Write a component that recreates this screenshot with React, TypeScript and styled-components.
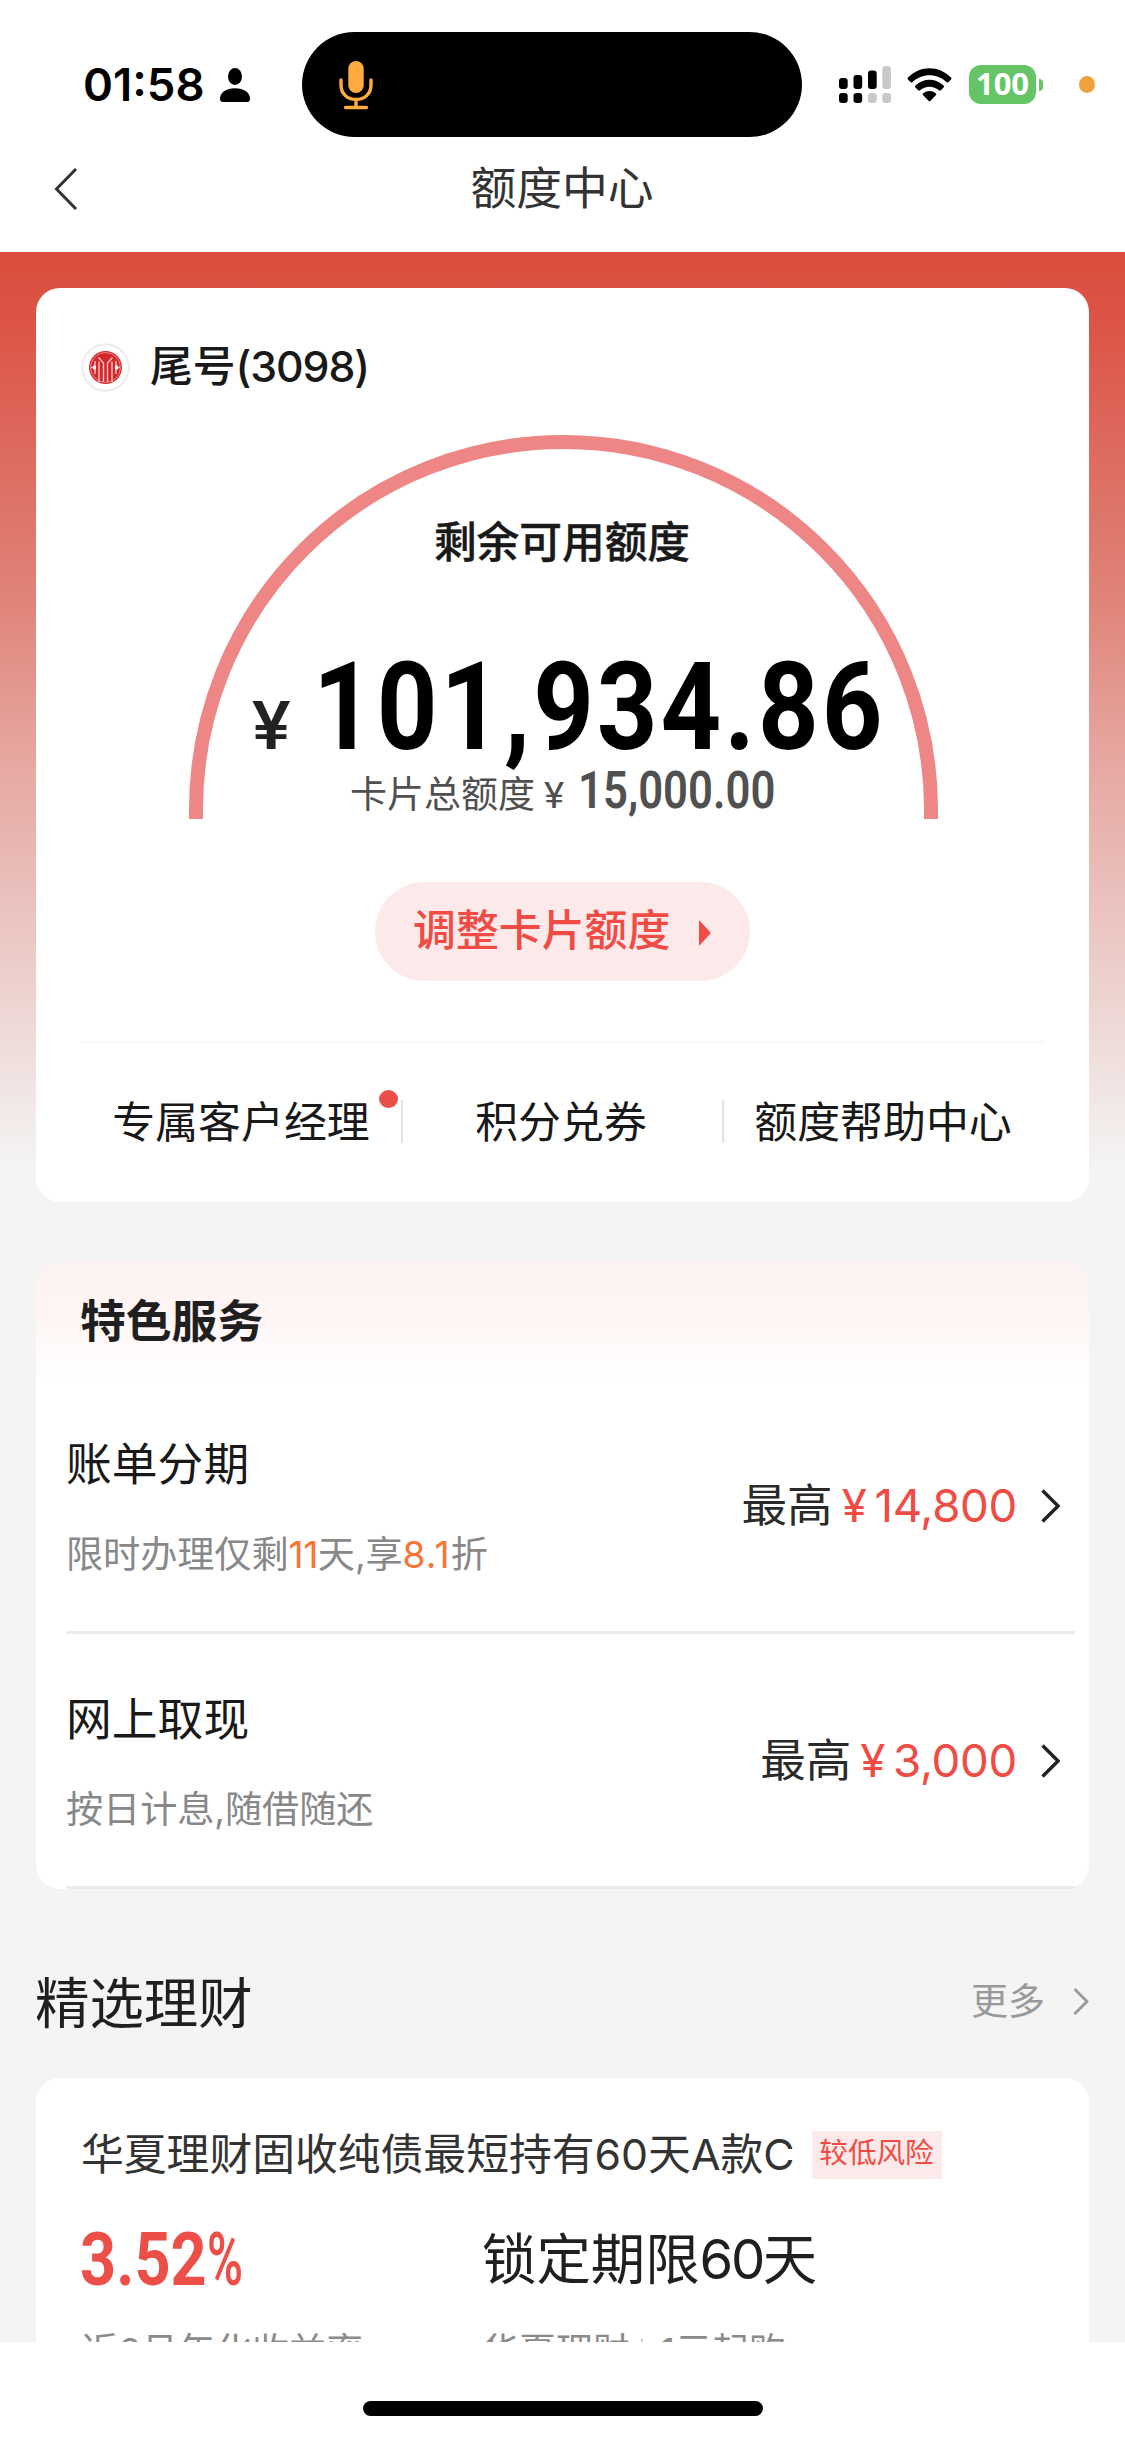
import React from "react";
import styled, { createGlobalStyle } from "styled-components";

const GlobalStyle = createGlobalStyle`
  * { box-sizing: border-box; }
  body {
    margin: 0;
    background: #fff;
    color: #1f1f1f;
    font-family: Inter, "Noto Sans CJK SC", sans-serif;
  }
  svg { display: block; flex: none; }
`;

const Screen = styled.div`
  width: 1125px;
  height: 2439px;
  display: flex;
  flex-direction: column;
  overflow: hidden;
  background: #fff;
`;

const StatusBar = styled.header`
  flex: none;
  height: 137px;
  padding: 32px 30px 0 83px;
  display: flex;
  align-items: center;
`;

const Clock = styled.span`
  width: 137px;
  font-size: 45.5px;
  font-weight: 600;
  line-height: 60px;
  color: #000;
  white-space: nowrap;
`;

const Island = styled.div`
  width: 500px;
  height: 105px;
  margin: 0 37px 0 52px;
  padding-left: 37px;
  border-radius: 53px;
  background: #000;
  display: flex;
  align-items: center;
`;

const Battery = styled.div`
  width: 67px;
  height: 39px;
  margin-left: 17px;
  border-radius: 12px;
  background: #65c466;
  color: #fff;
  font: 700 31px/37px "Open Sans", "Noto Sans", sans-serif;
  text-align: center;
`;

const BatteryTip = styled.div`
  width: 4px;
  height: 12px;
  margin-left: 3px;
  border-radius: 0 6px 6px 0;
  background: #65c466;
`;

const MicDot = styled.div`
  width: 16px;
  height: 17px;
  margin-left: 36px;
  border-radius: 50%;
  background: #f0a13c;
`;

const NavBar = styled.nav`
  flex: none;
  height: 115px;
  padding: 0 54px 12px;
  display: grid;
  grid-template-columns: 60px 1fr 60px;
  align-items: center;
`;

const NavTitle = styled.h1`
  margin: 0;
  padding: 1px 1px 0 0;
  font-size: 45.8px;
  font-weight: 400;
  line-height: 60px;
  color: #333;
  text-align: center;
`;

const Content = styled.main`
  flex: none;
  height: 2090px;
  padding: 36px 36px 0;
  overflow: hidden;
  background: #f4f4f4
    linear-gradient(180deg, #db4d3e 0, #dc5446 70px, #dd6256 150px, #e08479 348px, #e6a59f 498px, #edd4d1 748px, #f4f4f4 916px)
    no-repeat;
`;

const QuotaCard = styled.section`
  width: 1053px;
  height: 914px;
  padding: 53px 45px 0;
  border-radius: 24px;
  background: #fff;
`;

const BankLine = styled.div`
  height: 52px;
  display: flex;
  align-items: center;
  gap: 20px;
  font-size: 42.8px;
  font-weight: 500;
  line-height: 52px;
  color: #191919;
`;

const CardTail = styled.span`
  letter-spacing: -1.1px;
`;

const Dial = styled.div`
  position: relative;
  width: 749px;
  height: 384px;
  margin: 42px auto 0 108px;
`;

const DialArc = styled.svg`
  position: absolute;
  inset: 0;
`;

const DialBody = styled.div`
  position: relative;
  padding-top: 82px;
  display: flex;
  flex-direction: column;
  align-items: center;
`;

const DialLabel = styled.div`
  padding-right: 3px;
  font-size: 42.7px;
  font-weight: 500;
  line-height: 52px;
  color: #191919;
  -webkit-text-stroke: 0.4px #191919;
`;

const AmountRow = styled.div<{ $top: number; $left: number; $height: number }>`
  align-self: flex-start;
  margin: ${(p) => p.$top}px 0 0 ${(p) => p.$left}px;
  height: ${(p) => p.$height}px;
  display: flex;
  align-items: baseline;
  line-height: ${(p) => p.$height}px;
  white-space: nowrap;
`;

const Digits = styled.span<{ $size: number; $weight: number; $scale: number; $width: number; $color: string; $track?: number; $gap?: number }>`
  display: inline-block;
  width: ${(p) => p.$width}px;
  margin-left: ${(p) => p.$gap ?? 0}px;
  font-family: Roboto, sans-serif;
  font-size: ${(p) => p.$size}px;
  font-weight: ${(p) => p.$weight};
  letter-spacing: ${(p) => p.$track ?? 0}px;
  color: ${(p) => p.$color};
  transform: scaleX(${(p) => p.$scale});
  transform-origin: left center;
  white-space: nowrap;
`;

const TotalLabel = styled.span`
  font-size: 37px;
  color: #505050;
`;

const AdjustButton = styled.button`
  width: 375px;
  height: 99px;
  margin: 63px auto 0 294px;
  padding: 0 0 3px 38px;
  border: 0;
  border-radius: 50px;
  background: #fbeae9;
  color: #f04b44;
  display: flex;
  align-items: center;
  gap: 28px;
  font: 500 42.9px/52px Inter, "Noto Sans CJK SC", sans-serif;
`;

const PlayMark = styled.svg`
  margin-top: 5px;
`;

const QuickLinks = styled.div`
  margin-top: 60px;
  padding-top: 57px;
  border-top: 2px solid #f7f7f7;
  display: grid;
  grid-template-columns: 320px 321px 323px;
`;

const QuickLink = styled.a`
  position: relative;
  height: 43px;
  text-align: center;
  font-size: 42.9px;
  line-height: 44px;
  color: #191919;
  white-space: nowrap;
  & + & {
    padding-right: 3px;
    border-left: 2px solid #e3e3e3;
  }
`;

const Badge = styled.i`
  position: absolute;
  top: -10px;
  right: 3px;
  width: 19px;
  height: 18px;
  border-radius: 50%;
  background: #ea4f49;
`;

const ServiceCard = styled.section`
  width: 1053px;
  height: 627px;
  margin-top: 60px;
  border-radius: 24px;
  background: #fff linear-gradient(180deg, #fcf2f1 0, #fef5f4 50px, #fff 120px) no-repeat;
`;

const ServiceTitle = styled.h2`
  margin: 0;
  padding: 30px 44px 0;
  height: 117px;
  font-size: 45.8px;
  font-weight: 600;
  line-height: 60px;
`;

const ServiceRow = styled.div`
  height: 255px;
  margin: 0 14px 0 30px;
  padding-right: 15px;
  border-bottom: 3px solid #ebebeb;
  display: flex;
  align-items: center;
  justify-content: space-between;
`;

const ServiceText = styled.div`
  padding-top: 9px;
  display: flex;
  flex-direction: column;
  gap: 36px;
`;

const ServiceName = styled.div`
  font-size: 45.8px;
  line-height: 54px;
  color: #191919;
`;

const ServiceNote = styled.div`
  font-size: 37.2px;
  line-height: 54px;
  color: #888;
  letter-spacing: -0.1px;
`;

const Hot = styled.span<{ $track: number }>`
  color: #f87434;
  letter-spacing: ${(p) => p.$track}px;
`;

const Limit = styled.div`
  padding-top: 2px;
  display: flex;
  align-items: center;
  font-size: 45.6px;
  line-height: 54px;
  color: #2a2a2a;
`;

const LimitValue = styled.span<{ $gap: number }>`
  margin-left: ${(p) => p.$gap}px;
  color: #f04b44;
  letter-spacing: -0.3px;
`;

const Arrow = styled.svg`
  margin-left: 24px;
`;

const SectionHead = styled.div`
  height: 189px;
  padding-top: 38px;
  display: flex;
  align-items: center;
  justify-content: space-between;
  width: 1053px;
`;

const SectionTitle = styled.h2`
  margin: 0 0 0 -1px;
  font-size: 54.4px;
  font-weight: 400;
  line-height: 70px;
`;

const More = styled.a`
  display: flex;
  align-items: center;
  gap: 28px;
  font-size: 37px;
  line-height: 50px;
  margin-top: -2px;
  color: #999;
`;

const FundCard = styled.section`
  width: 1053px;
  height: 400px;
  padding: 51px 45px 0;
  border-radius: 24px;
  background: #fff;
`;

const FundHead = styled.div`
  height: 52px;
  display: flex;
  align-items: center;
  gap: 18px;
`;

const FundName = styled.div`
  font-size: 42.8px;
  line-height: 52px;
  color: #333;
  white-space: nowrap;
`;

const RiskTag = styled.span`
  width: 130px;
  height: 48px;
  padding-right: 2px;
  background: #fbeae9;
  color: #f04b44;
  font-size: 28.6px;
  line-height: 44px;
  text-align: center;
  white-space: nowrap;
`;

const FundGrid = styled.div`
  margin-top: 42px;
  display: grid;
  grid-template-columns: 401px 1fr;
  grid-template-rows: 72px 50px;
  row-gap: 32px;
  align-items: center;
`;

const FundRate = styled.div`
  margin-left: -1px;
  white-space: nowrap;
`;

const FundTerm = styled.div`
  font-size: 54.4px;
  line-height: 72px;
`;

const TermDays = styled.span`
  letter-spacing: -2.4px;
`;

const FundNote = styled.div`
  display: flex;
  align-items: center;
  font-size: 37px;
  line-height: 50px;
  color: #8a8a8a;
`;

const NoteDivider = styled.i`
  width: 2px;
  height: 26px;
  margin: 0 17px 0 11px;
  background: #ccc;
`;

const Bottom = styled.footer`
  position: relative;
  flex: 1;
  padding-top: 59px;
  background: #fff;
`;

const HomeBar = styled.div`
  width: 400px;
  height: 15px;
  margin: 0 auto;
  border-radius: 8px;
  background: #000;
`;

const PersonIcon = () => (
  <svg width="30" height="34" viewBox="0 0 30 32" preserveAspectRatio="none">
    <ellipse cx="15" cy="8" rx="7" ry="8" />
    <path d="M0 29C0 23 6 19 15 19s15 4 15 10c0 2-1 3-3 3H3c-2 0-3-1-3-3Z" />
  </svg>
);

const MicIcon = () => (
  <svg width="34" height="50" viewBox="0 0 34 50" fill="none" stroke="#ffab40" strokeWidth="3.4" strokeLinecap="round">
    <rect x="9.3" y="1" width="15.4" height="32" rx="7.7" fill="#ffab40" stroke="none" />
    <path d="M2 20v5c0 9 6.500 14.500 15 14.500S32 34 32 25v-5M17 40v7M6.500 47.500h21" />
  </svg>
);

const bars = [
  { x: 0, y: 12, h: 11, on: true, low: true },
  { x: 14.5, y: 9, h: 14, on: true, low: true },
  { x: 29, y: 4.5, h: 18.5, on: true, low: false },
  { x: 43.3, y: 0, h: 23, on: false, low: false },
];

const SignalIcon = () => (
  <svg width="52" height="37" viewBox="0 0 52 37">
    {bars.map((b) => (
      <g key={b.x}>
        <rect x={b.x} y={b.y} width="8.7" height={b.h} rx="3" fill={b.on ? "#000" : "#c9c9c9"} />
        <rect x={b.x} y="27" width="8.7" height="10" rx="3" fill={b.low ? "#000" : "#c9c9c9"} />
      </g>
    ))}
  </svg>
);

const WifiMark = styled.svg`
  margin-left: 16px;
`;

const WifiIcon = () => (
  <WifiMark width="45" height="34" viewBox="0 0 45 34">
    <path d="M1 9.500C13-3 32-3 44 9.500c.7.8.6 1.400 0 2l-2.500 2.500c-.7.700-1.400.700-2 0-9.500-9-24.500-9-34 0-.6.700-1.300.700-2 0L1 11.500c-.6-.6-.7-1.200 0-2Z" />
    <path d="M8.500 17.500c8-7.700 20-7.700 28 0 .7.700.7 1.300 0 2l-2.700 2.800c-.6.600-1.200.6-1.900 0-5.400-4.800-13.400-4.800-18.800 0-.7.6-1.300.6-1.900 0l-2.700-2.800c-.7-.7-.7-1.300 0-2Z" />
    <path d="M16.300 25.300c3.700-3 8.700-3 12.400 0 .8.700.8 1.200.1 1.900l-5.300 5.600c-.7.700-1.300.7-2 0l-5.300-5.600c-.7-.7-.7-1.200.1-1.900Z" />
  </WifiMark>
);

const BackIcon = () => (
  <svg width="24" height="42" viewBox="0 0 24 42" fill="none" stroke="#333" strokeWidth="3">
    <path d="M22 1 2.500 21 22 41" />
  </svg>
);

const BankLogo = () => (
  <svg width="49" height="49" viewBox="0 0 49 49" fill="none">
    <circle cx="24.500" cy="24.500" r="23.200" fill="#fff" stroke="#ececec" strokeWidth="2" />
    <circle cx="24.500" cy="24.500" r="16.500" fill="#d5282d" />
    <circle cx="24.500" cy="24.500" r="15" stroke="#ea8586" strokeWidth="1" />
    <path
      d="M22.500 39V20l-5-5.500M26.500 39V20l5-5.500M18 39V18.500M31 39V18.500M10 24.500h3.500M39 24.500h-3.500M14 18v13M35 18v13"
      stroke="#f7c5c5"
      strokeWidth="1.400"
    />
    <path d="M12 22.800h3v3.400h-3zM34 22.800h3v3.400h-3z" fill="#fff" />
  </svg>
);

const ChevronRight = () => (
  <Arrow width="19" height="34" viewBox="0 0 19 34" fill="none" stroke="#222" strokeWidth="3.4">
    <path d="M1.500 1.500 17 17 1.500 32.500" />
  </Arrow>
);

const services = [
  {
    name: "账单分期",
    note: (
      <>
        限时办理仅剩<Hot $track={-0.5}>11</Hot>天,享<Hot $track={1.1}>8.1</Hot>折
      </>
    ),
    limit: "14,800",
  },
  { name: "网上取现", note: <>按日计息,随借随还</>, limit: "3,000" },
];

export default function App() {
  return (
    <Screen>
      <GlobalStyle />
      <StatusBar>
        <Clock>01:58</Clock>
        <PersonIcon />
        <Island>
          <MicIcon />
        </Island>
        <SignalIcon />
        <WifiIcon />
        <Battery>100</Battery>
        <BatteryTip />
        <MicDot />
      </StatusBar>
      <NavBar>
        <BackIcon />
        <NavTitle>额度中心</NavTitle>
      </NavBar>

      <Content>
        <QuotaCard>
          <BankLine>
            <BankLogo />
            <span>
              尾号<CardTail>(3098)</CardTail>
            </span>
          </BankLine>
          <Dial>
            <DialArc width="749" height="384" viewBox="0 0 749 384" fill="none">
              <path d="M7 384v-9.500a367.500 367.500 0 0 1 735 0v9.500" stroke="#ee8685" strokeWidth="14" />
            </DialArc>
            <DialBody>
              <DialLabel>剩余可用额度</DialLabel>
              <AmountRow $top={76} $left={63} $height={126}>
                <Digits $size={66} $weight={500} $scale={1.1} $width={40} $color="#222">¥</Digits>
                <Digits $size={122} $weight={700} $scale={0.868} $width={570} $color="#000" $track={3.4} $gap={21}>
                  101,934.86
                </Digits>
              </AmountRow>
              <AmountRow $top={-10} $left={161} $height={60}>
                <TotalLabel>卡片总额度</TotalLabel>
                <Digits $size={37} $weight={400} $scale={1.04} $width={22} $color="#505050" $gap={9}>¥</Digits>
                <Digits $size={52} $weight={600} $scale={0.84} $width={200} $color="#505050" $gap={12}>
                  15,000.00
                </Digits>
              </AmountRow>
            </DialBody>
          </Dial>
          <AdjustButton>
            调整卡片额度
            <PlayMark width="13" height="26" viewBox="0 0 13 26">
              <path d="M1 1.500Q1 0 2 1l10 11q1 1 0 2L2 25q-1 1-1-.5Z" fill="#f04b44" />
            </PlayMark>
          </AdjustButton>
          <QuickLinks>
            <QuickLink>
              专属客户经理
              <Badge />
            </QuickLink>
            <QuickLink>积分兑券</QuickLink>
            <QuickLink>额度帮助中心</QuickLink>
          </QuickLinks>
        </QuotaCard>

        <ServiceCard>
          <ServiceTitle>特色服务</ServiceTitle>
          {services.map((s) => (
            <ServiceRow key={s.name}>
              <ServiceText>
                <ServiceName>{s.name}</ServiceName>
                <ServiceNote>{s.note}</ServiceNote>
              </ServiceText>
              <Limit>
                最高
                <LimitValue $gap={9}>¥</LimitValue>
                <LimitValue $gap={8}>{s.limit}</LimitValue>
                <ChevronRight />
              </Limit>
            </ServiceRow>
          ))}
        </ServiceCard>

        <SectionHead>
          <SectionTitle>精选理财</SectionTitle>
          <More>
            更多
            <svg width="16" height="27" viewBox="0 0 16 27" fill="none" stroke="#999" strokeWidth="2.8">
              <path d="M1.500 1 14 13.500 1.500 26" />
            </svg>
          </More>
        </SectionHead>

        <FundCard>
          <FundHead>
            <FundName>华夏理财固收纯债最短持有60天A款C</FundName>
            <RiskTag>较低风险</RiskTag>
          </FundHead>
          <FundGrid>
            <FundRate>
              <Digits $size={75} $weight={700} $scale={0.84} $width={127} $color="#ec4e48">3.52</Digits>
              <Digits $size={75} $weight={600} $scale={0.65} $width={36} $color="#ec4e48">%</Digits>
            </FundRate>
            <FundTerm>
              锁定期限<TermDays>60</TermDays>天
            </FundTerm>
            <FundNote>近6月年化收益率</FundNote>
            <FundNote>
              华夏理财
              <NoteDivider />
              1元起购
            </FundNote>
          </FundGrid>
        </FundCard>
      </Content>

      <Bottom>
        <HomeBar />
      </Bottom>
    </Screen>
  );
}
